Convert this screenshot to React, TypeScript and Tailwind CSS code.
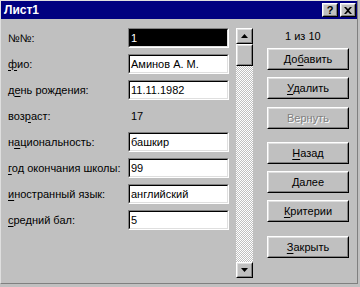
// Форма данных Excel (Windows 98) — лист "Лист1"

type Field = { label: string; acc: number; value: string; kind: 'selected' | 'input' | 'static' };

const FIELDS: Field[] = [
  { label: '№№:', acc: -1, value: '1', kind: 'selected' },
  { label: 'фио:', acc: 0, value: 'Аминов А. М.', kind: 'input' },
  { label: 'день рождения:', acc: 1, value: '11.11.1982', kind: 'input' },
  { label: 'возраст:', acc: 3, value: '17', kind: 'static' },
  { label: 'национальность:', acc: 1, value: 'башкир', kind: 'input' },
  { label: 'год окончания школы:', acc: 0, value: '99', kind: 'input' },
  { label: 'иностранный язык:', acc: 0, value: 'английский', kind: 'input' },
  { label: 'средний бал:', acc: 0, value: '5', kind: 'input' },
];

const BUTTONS = [
  { label: 'Добавить', acc: 2, mt: 'mt-[4px]' },
  { label: 'Удалить', acc: 0, mt: 'mt-[7px]' },
  { label: 'Вернуть', acc: -1, mt: 'mt-[8px]', disabled: true },
  { label: 'Назад', acc: 0, mt: 'mt-[13px]' },
  { label: 'Далее', acc: 0, mt: 'mt-[7px]' },
  { label: 'Критерии', acc: 0, mt: 'mt-[7px]' },
  { label: 'Закрыть', acc: 0, mt: 'mt-[14px]' },
];

function Acc({ text, acc }: { text: string; acc: number }) {
  if (acc < 0) return <>{text}</>;
  return (
    <>
      {text.slice(0, acc)}
      <u className="underline-offset-[2px]">{text[acc]}</u>
      {text.slice(acc + 1)}
    </>
  );
}

// выпуклая рамка кнопки win98
function Raised({ className, children }: { className: string; children: React.ReactNode }) {
  return (
    <div className={`border border-t-white border-l-white border-r-black border-b-black ${className}`}>
      <div className="w-full h-full border border-t-[#dfdfdf] border-l-[#dfdfdf] border-r-[#808080] border-b-[#808080] bg-[#c0c0c0] flex items-center justify-center">
        {children}
      </div>
    </div>
  );
}

function Arrow({ up }: { up?: boolean }) {
  return (
    <svg width="7" height="4" viewBox="0 0 7 4">
      <path d={up ? 'M3.5 0 L7 4 L0 4 Z' : 'M0 0 L7 0 L3.5 4 Z'} fill="#000" />
    </svg>
  );
}

function FieldRow({ f }: { f: Field }) {
  return (
    <div className="flex items-center h-[20px]">
      <div className="w-[120px] whitespace-nowrap">
        <Acc text={f.label} acc={f.acc} />
      </div>
      {f.kind === 'static' ? (
        <div className="w-[101px] pl-[3px]">{f.value}</div>
      ) : (
        <div className="w-[101px] h-[20px] border border-t-[#808080] border-l-[#808080] border-r-white border-b-white">
          <div
            className={`w-full h-full border border-t-black border-l-black border-r-[#dfdfdf] border-b-[#dfdfdf] flex items-center pl-[1px] ${
              f.kind === 'selected' ? 'bg-black text-white' : 'bg-white'
            }`}
          >
            {f.value}
          </div>
        </div>
      )}
    </div>
  );
}

export default function App() {
  return (
    <div className="w-[360px] h-[287px] bg-[#c0c0c0] overflow-hidden font-['Liberation_Sans',Arial,sans-serif] text-[11px] text-black leading-[13px]">
      <div className="w-[358px] h-[284px] border border-t-[#dfdfdf] border-l-[#dfdfdf] border-r-[#808080] border-b-[#808080] flex flex-col">
        {/* заголовок */}
        <div className="h-[18px] bg-[#000080] flex items-center pl-[3px] pr-[1px]">
          <span className="text-white font-bold text-[12px] flex-1">Лист1</span>
          <Raised className="w-[16px] h-[14px]">
            <span className="font-bold text-[11px] leading-none">?</span>
          </Raised>
          <Raised className="w-[16px] h-[14px] ml-[2px]">
            <svg width="8" height="7" viewBox="0 0 8 7">
              <path d="M0 0 L2 0 L4 2 L6 0 L8 0 L5 3.5 L8 7 L6 7 L4 5 L2 7 L0 7 L3 3.5 Z" fill="#000" />
            </svg>
          </Raised>
        </div>

        <div className="flex pt-[9px]">
          {/* поля */}
          <div className="pl-[7px] flex flex-col gap-[6px]">
            {FIELDS.map(f => (
              <FieldRow key={f.label} f={f} />
            ))}
          </div>

          {/* полоса прокрутки */}
          <div className="ml-[7px] w-[17px] h-[250px] flex flex-col [background-image:repeating-conic-gradient(#c0c0c0_0_25%,#ffffff_0_50%)] [background-size:2px_2px]">
            <Raised className="w-[17px] h-[16px]">
              <Arrow up />
            </Raised>
            <Raised className="w-[17px] h-[22px]">
              <span />
            </Raised>
            <div className="flex-1" />
            <Raised className="w-[17px] h-[16px]">
              <Arrow />
            </Raised>
          </div>

          {/* кнопки */}
          <div className="ml-[14px] w-[82px] flex flex-col">
            <div className="h-[16px] flex items-center pl-[18px]">1 из 10</div>
            {BUTTONS.map(b => (
              <Raised key={b.label} className={`w-[82px] h-[22px] ${b.mt}`}>
                <span className={b.disabled ? 'text-[#808080] [text-shadow:1px_1px_0_#ffffff]' : ''}>
                  <Acc text={b.label} acc={b.acc} />
                </span>
              </Raised>
            ))}
          </div>
        </div>
      </div>
    </div>
  );
}
